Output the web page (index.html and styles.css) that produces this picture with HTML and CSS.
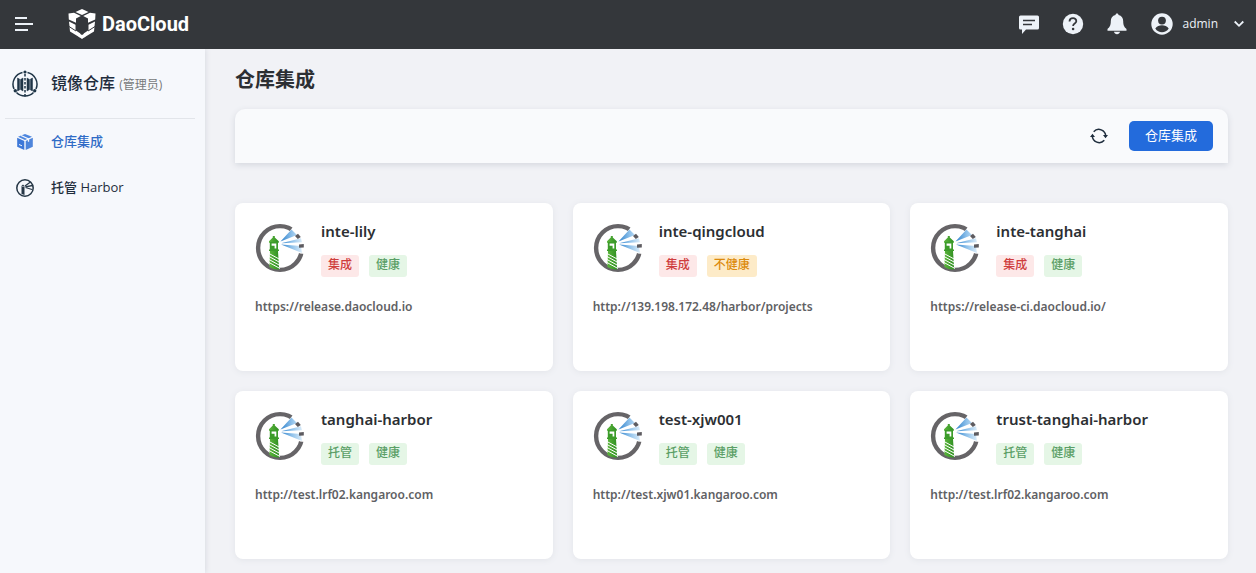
FILE: index.html
```html
<!DOCTYPE html>
<html lang="zh-CN">
<head>
<meta charset="utf-8">
<meta name="viewport" content="width=device-width, initial-scale=1">
<title>仓库集成</title>
<link rel="stylesheet" href="styles.css">
</head>
<body>
<svg class="sprite" aria-hidden="true">
  <defs>
    <linearGradient id="beam" gradientUnits="userSpaceOnUse" x1="25" x2="48" y1="20" y2="20">
      <stop offset="0" stop-color="#2b7fca"/>
      <stop offset=".5" stop-color="#8dc0ea"/>
      <stop offset="1" stop-color="#e2f0fa"/>
    </linearGradient>
    <linearGradient id="tower" x1="0" x2="1" y1="0" y2="0">
      <stop offset="0" stop-color="#5cb53c"/>
      <stop offset="1" stop-color="#2f8f22"/>
    </linearGradient>
    <symbol id="harbor" viewBox="0 0 50 50">
      <circle cx="25" cy="25" r="21.900" fill="none" stroke="#666467" stroke-width="4.400"/>
      <path d="M27 19 38.500 3 50 3v28l-5-.5z" fill="#fff"/>
      <path d="M25.500 18.500 36.500 6.500l5.500 5.500zM26 20.200l20-5 1 4zM26 21.500l20 1.500 1 7z" fill="url(#beam)"/>
      <path d="m40 13 3-2.200 2.800 3.200-3 2zM44 21.500l4.800-.5v3.500l-4.800.3z" fill="#5d5b60"/>
      <path d="M14 18.300 17.800 14.500v-1.500h2v1.500l4 3.800v1.500h-9.800z" fill="url(#tower)"/>
      <path d="M14.800 19h8.200v7.500h1v1.500H14v-1.500h.8z" fill="#3c9c2a"/>
      <path d="M16.600 20.500h4.700v5h-1.700v-2.700h-3z" fill="#fff"/>
      <path d="M15 28h8l1.200 18.500q-5.300.5-9.800-2.500z" fill="url(#tower)"/>
      <path d="m14 30.500 11 6m-11-3 11 6m-11-3 11 6m-11-3 11 6" stroke="#fff" stroke-width="1"/>
    </symbol>
  </defs>
</svg>

<header class="topbar">
  <button class="icon-button menu-button" aria-label="菜单">
    <svg width="18" height="16" viewBox="0 0 18 16" fill="none" stroke="currentColor" stroke-width="2"><path d="M0 2h12M0 8h18M0 14h13"/></svg>
  </button>
  <a class="brand" href="#">
    <svg width="28" height="30" viewBox="0 0 28 30" fill="currentColor">
      <path d="M14 0 20.500 3 14 6 7.500 3z"/>
      <path d="M.5 4.500 6 3.800 12.800 7 8 9.500v4.300L.8 10.500zM27.500 4.500 22 3.800 15.200 7 20 9.500v4.300l7.200-3.300z"/>
      <path d="m1 12.500 6.500 3.300v5.500l4.800 3.200v4.300L2 22.500zM27 12.500l-6.500 3.300v5.500l-4.800 3.200v4.300L26 22.500z"/>
      <path d="m10.500 24 3.500 2 3.500-2v3.500L14 30l-3.500-2.500z"/>
      <path d="m1 17.500 7 4.500M27 17.500 20 22" stroke="#34373b" stroke-width="1"/>
    </svg>
    <span>DaoCloud</span>
  </a>
  <nav class="actions" aria-label="工具">
    <button class="icon-button" aria-label="消息">
      <svg width="22" height="22" viewBox="0 0 22 22"><path d="M2.500 2.500h17A1.500 1.500 0 0 1 21 4v11a1.500 1.500 0 0 1-1.500 1.500H8l-4 4.500v-4.500H2.500A1.500 1.500 0 0 1 1 15V4a1.500 1.500 0 0 1 1.500-1.500z" fill="currentColor"/><path d="M5 7.500h12M5 11.500h9" stroke="#34373b" stroke-width="1.600"/></svg>
    </button>
    <button class="icon-button" aria-label="帮助">
      <svg width="22" height="22" viewBox="0 0 22 22"><circle cx="11" cy="11" r="10.200" fill="currentColor"/><path d="M7.500 8.500c.2-4.500 7-4.300 6.800-.2-.1 2.400-3.200 2.200-3.200 4.700" fill="none" stroke="#34373b" stroke-width="1.800"/><circle cx="11.100" cy="16" r="1.300" fill="#34373b"/></svg>
    </button>
    <button class="icon-button" aria-label="通知">
      <svg width="22" height="22" viewBox="0 0 22 22" fill="currentColor"><path d="M11 .5c1 0 1.500.7 1.500 1.500 3.200.7 4.700 3.200 4.700 6.300 0 4.300 1.300 6 3.300 7.700v1.800h-19V16c2-1.700 3.300-3.400 3.300-7.700 0-3.100 1.500-5.600 4.700-6.300 0-.8.500-1.500 1.500-1.500zM8 18.800h6c-.3 3.200-5.700 3.200-6 0z"/></svg>
    </button>
    <button class="account">
      <svg width="22" height="22" viewBox="0 0 22 22"><circle cx="11" cy="11" r="10.700" fill="currentColor"/><circle cx="11" cy="7.600" r="3.900" fill="#34373b"/><path d="M4.300 15.500c3-4.200 10.400-4.200 13.400 0-3 5-10.400 5-13.400 0z" fill="#34373b"/></svg>
      <span>admin</span>
      <svg class="chevron" width="10" height="8" viewBox="0 0 10 8" fill="none" stroke="currentColor" stroke-width="1.800"><path d="m.7 1.500 4.300 4.300 4.300-4.300"/></svg>
    </button>
  </nav>
</header>

<div class="shell">
  <aside class="sidebar">
    <div class="product">
      <svg width="26" height="28" viewBox="0 0 26 28" fill="none" stroke="#1f3547" stroke-width="1.500">
        <path d="M15.500 2.500A12 12 0 0 1 24 19M21.500 22.500a12 12 0 0 1-17 0M2 19A12 12 0 0 1 10.500 2.500"/>
        <path d="M13 4v23" stroke-width="1.500" stroke-dasharray="2.500 1.500"/>
        <path d="m5.500 8 2 1v11l-2 1zM8.500 9.500 11 8v13l-2.500-1.500zM20.500 8l-2 1v11l2 1zM17.500 9.500 15 8v13l2.500-1.500z" fill="#1f3547" stroke="#1f3547" stroke-width=".5"/>
        <g fill="#1f3547" stroke="none"><circle cx="13" cy="2" r="1.600"/><circle cx="3.300" cy="20.800" r="1.700"/><circle cx="22.700" cy="20.800" r="1.700"/></g>
      </svg>
      <p class="product-name">镜像仓库 <small>(管理员)</small></p>
    </div>
    <nav class="side-nav" aria-label="镜像仓库">
      <a class="side-link active" href="#">
        <svg width="18" height="18" viewBox="0 0 18 18"><path d="m9 1 7 2.700L9 7 2 3.700z" fill="#4d86df"/><path d="m1.200 4.800 7.100 3.300v8.900l-7.100-3.200z" fill="#3d78d8"/><path d="m16.800 4.800-7.100 3.300v8.900l7.100-3.200z" fill="#4e85db"/><path d="m5 2.500 7.500 3.300v3" fill="none" stroke="#f6f8fc" stroke-width="1.300"/><path d="m3 11.500 3 1.300" stroke="#f6f8fc"/></svg>
        <span>仓库集成</span>
      </a>
      <a class="side-link" href="#">
        <svg width="18" height="18" viewBox="0 0 18 18" fill="none" stroke="#263746"><circle cx="9" cy="9" r="8.200" stroke-width="1.500"/><path d="M4.800 7.500 7 5.500l2 2zM5.500 8h3v8l-3-1z" fill="#263746" stroke="none"/><path d="m9 7 5.500-4M9.500 7.800l7-1.300M9.500 8.500l6.500 2" stroke-width="1.300"/></svg>
        <span>托管 Harbor</span>
      </a>
    </nav>
  </aside>

  <main class="content">
    <h1>仓库集成</h1>
    <div class="toolbar">
      <button class="refresh" aria-label="刷新">
        <svg width="18" height="16" viewBox="0 0 18 16" fill="none" stroke="currentColor" stroke-width="1.500"><path d="M3.700 3.700a6.900 6.900 0 0 1 12 4.500M14.300 12.300a6.900 6.900 0 0 1-12-4.500"/><path d="M13 7h5l-2.500 3.300zM5 9H0l2.500-3.300z" fill="currentColor" stroke="none"/></svg>
      </button>
      <button class="primary">仓库集成</button>
    </div>

    <section class="cards" aria-label="仓库">
      <article class="card">
        <div class="card-head">
          <svg class="harbor"><use href="#harbor"/></svg>
          <div><h2>inte-lily</h2><div class="tags"><span class="tag red">集成</span><span class="tag green">健康</span></div></div>
        </div>
        <p class="url">https://release.daocloud.io</p>
      </article>
      <article class="card">
        <div class="card-head">
          <svg class="harbor"><use href="#harbor"/></svg>
          <div><h2>inte-qingcloud</h2><div class="tags"><span class="tag red">集成</span><span class="tag amber">不健康</span></div></div>
        </div>
        <p class="url">http://139.198.172.48/harbor/projects</p>
      </article>
      <article class="card">
        <div class="card-head">
          <svg class="harbor"><use href="#harbor"/></svg>
          <div><h2>inte-tanghai</h2><div class="tags"><span class="tag red">集成</span><span class="tag green">健康</span></div></div>
        </div>
        <p class="url">https://release-ci.daocloud.io/</p>
      </article>
      <article class="card">
        <div class="card-head">
          <svg class="harbor"><use href="#harbor"/></svg>
          <div><h2>tanghai-harbor</h2><div class="tags"><span class="tag green">托管</span><span class="tag green">健康</span></div></div>
        </div>
        <p class="url">http://test.lrf02.kangaroo.com</p>
      </article>
      <article class="card">
        <div class="card-head">
          <svg class="harbor"><use href="#harbor"/></svg>
          <div><h2>test-xjw001</h2><div class="tags"><span class="tag green">托管</span><span class="tag green">健康</span></div></div>
        </div>
        <p class="url">http://test.xjw01.kangaroo.com</p>
      </article>
      <article class="card">
        <div class="card-head">
          <svg class="harbor"><use href="#harbor"/></svg>
          <div><h2>trust-tanghai-harbor</h2><div class="tags"><span class="tag green">托管</span><span class="tag green">健康</span></div></div>
        </div>
        <p class="url">http://test.lrf02.kangaroo.com</p>
      </article>
    </section>
  </main>
</div>
</body>
</html>
```
FILE: styles.css
```css
* { box-sizing: border-box; }

body {
  margin: 0;
  min-height: 100vh;
  display: flex;
  flex-direction: column;
  background: #f1f2f6;
  color: #2c2f33;
  font: 13px/20px "Open Sans", "Noto Sans CJK SC", sans-serif;
}

h1, h2, p { margin: 0; }
svg { display: block; flex: none; }
a { color: inherit; text-decoration: none; }

button {
  border: 0;
  padding: 0;
  background: none;
  color: inherit;
  font: inherit;
  cursor: pointer;
}

.sprite { position: absolute; width: 0; height: 0; }

.topbar {
  position: relative;
  z-index: 1;
  display: flex;
  align-items: center;
  height: 49px;
  padding: 0 12px 2px 15px;
  background: #34373b;
  color: #edf2f8;
}

.menu-button { margin-right: 35px; }

.brand {
  display: flex;
  align-items: center;
  gap: 6px;
  color: #fff;
  font: 700 20px/28px Roboto, sans-serif;
}

.actions {
  display: flex;
  align-items: center;
  gap: 22px;
  margin-left: auto;
}

.account {
  display: flex;
  align-items: center;
  gap: 9px;
  margin-left: 1px;
  font-size: 12px;
}

.chevron { margin-left: 7px; }

.shell { display: flex; flex: 1; }

.sidebar {
  flex: 0 0 205px;
  padding: 0 10px 0 5px;
  background: #f6f8fc;
  box-shadow: 1px 0 5px #d9dce2;
}

.product {
  display: flex;
  align-items: center;
  gap: 13px;
  height: 70px;
  padding-left: 7px;
  border-bottom: 1px solid #e2e5ea;
  color: #1f2d3d;
}

.product-name { font-size: 16px; font-weight: 500; }
.product-name small { color: #77797a; font-size: 12px; font-weight: 400; }

.side-link {
  display: flex;
  align-items: center;
  gap: 17px;
  height: 46px;
  padding-left: 11px;
  color: #1f2d3d;
  font-weight: 500;
}

.side-link span { padding-bottom: 2px; }
.side-link.active { color: #2f6bc6; }

.content {
  flex: 1;
  min-width: 0;
  padding: 17px 28px 14px 30px;
}

h1 { font-size: 20px; line-height: 28px; font-weight: 700; }

.toolbar {
  display: flex;
  align-items: center;
  justify-content: flex-end;
  gap: 21px;
  height: 54px;
  margin: 15px 0 40px;
  padding-right: 15px;
  border-radius: 10px 10px 0 0;
  background: #f9fafc;
  box-shadow: 0 2px 6px #d4d7de;
}

.refresh { color: #1f2d3d; }

.primary {
  height: 30px;
  padding: 0 16px 2px;
  border-radius: 5px;
  background: #236bdc;
  color: #fff;
}

.cards {
  display: grid;
  grid-template-columns: repeat(3, 1fr);
  gap: 20px;
}

.card {
  min-height: 168px;
  padding: 18px 20px;
  border-radius: 8px;
  background: #fff;
  box-shadow: 0 1px 6px #e2e4e9;
}

.card-head { display: flex; gap: 16px; }
.harbor { width: 50px; height: 50px; margin-top: 2px; }

h2 {
  font: 600 15px/20px "Noto Sans", "Noto Sans CJK SC", sans-serif;
}

.tags { display: flex; gap: 10px; margin-top: 14px; }

.tag {
  padding: 0 7px 2px;
  border-radius: 3px;
  font-size: 12px;
  font-weight: 500;
}

.red { background: #fde8e8; color: #cf3e3e; }
.green { background: #e5f6e6; color: #5b9f66; }
.amber { background: #fdebc8; color: #dc8a0c; }

.url {
  margin-top: 20px;
  color: #5f6164;
  font: 600 12px/20px "Noto Sans", "Noto Sans CJK SC", sans-serif;
}
```
